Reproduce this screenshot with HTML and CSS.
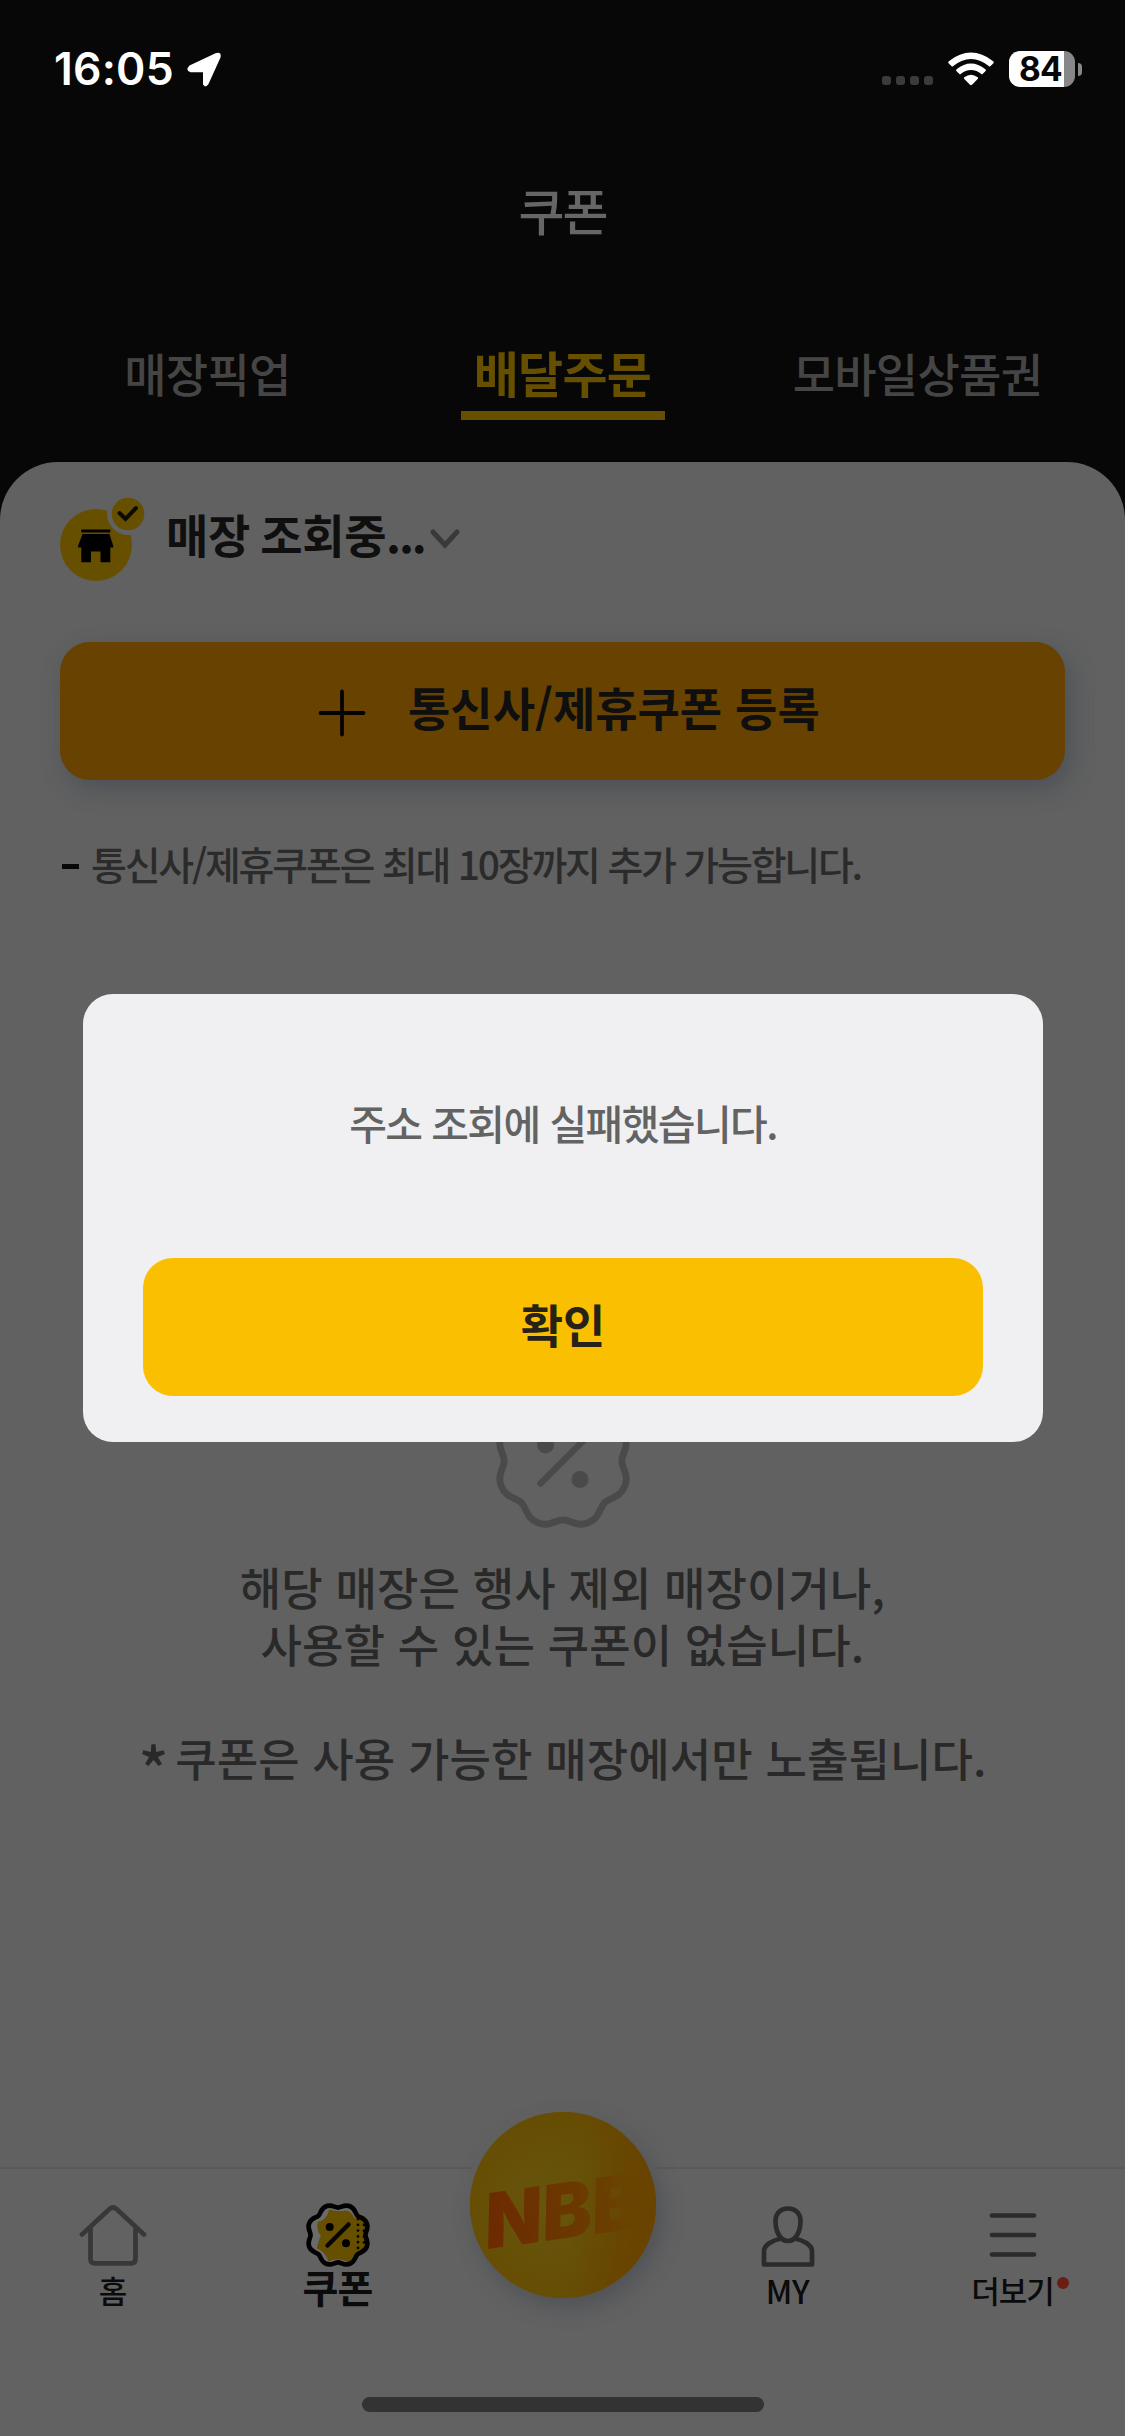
FILE: index.html
```html
<!DOCTYPE html>
<html lang="ko">
<head>
<meta charset="utf-8">
<title>쿠폰</title>
<link rel="stylesheet" href="styles.css">
</head>
<body>
<svg class="defs" width="0" height="0" aria-hidden="true">
  <defs>
    <path id="badge" d="M56 0C56 7 63.3 13.2 58.7 24.3C54.1 35.4 44.5 34.7 39.6 39.6C34.7 44.5 35.4 54.1 24.3 58.7C13.2 63.3 7 56 0 56C-7 56 -13.2 63.3 -24.3 58.7C-35.4 54.1 -34.7 44.5 -39.6 39.6C-44.5 34.7 -54.1 35.4 -58.7 24.3C-63.3 13.2 -56 7 -56 0C-56 -7 -63.3 -13.2 -58.7 -24.3C-54.1 -35.4 -44.5 -34.7 -39.6 -39.6C-34.7 -44.5 -35.4 -54.1 -24.3 -58.7C-13.2 -63.3 -7 -56 0 -56C7 -56 13.2 -63.3 24.3 -58.7C35.4 -54.1 34.7 -44.5 39.6 -39.6C44.5 -34.7 54.1 -35.4 58.7 -24.3C63.3 -13.2 56 -7 56 0Z"/>
  </defs>
</svg>
<div class="screen">
  <header class="header">
    <div class="status">
      <div class="status-left">
        <span class="time">16:05</span>
        <svg class="location" width="36" height="36" viewBox="0 0 36 36"><path d="M3.500 13.500L29.500 1.200Q35.800-.6 34.500 5.500L22.500 32Q19.500 36.500 17 32.600V20.300H4.500Q-1.200 18.500 3.500 13.500Z"/></svg>
      </div>
      <div class="status-right">
        <div class="signal"><i></i><i></i><i></i><i></i></div>
        <svg class="wifi" width="46" height="34" viewBox="0 0 46 34"><path d="M.8 9.200Q23-8 45.200 9.200Q46.300 10.200 45.200 11.400L41.800 14.800Q23-.6 4.200 14.800L.8 11.400Q-.3 10.200.8 9.200ZM8.600 17.300Q23 5.800 37.400 17.300Q38.400 18.200 37.400 19.200L34 22.500Q23 13.600 12 22.500L8.600 19.200Q7.600 18.200 8.600 17.300ZM16.300 25.300Q23 20.200 29.700 25.300Q30.500 26 29.700 27L24 32.700Q23 33.600 22 32.700L16.300 27Q15.500 26 16.300 25.300Z"/></svg>
        <div class="battery"><span>84</span></div>
        <i class="battery-tip"></i>
      </div>
    </div>
    <h1 class="title">쿠폰</h1>
    <nav class="tabs">
      <a class="tab">매장픽업</a>
      <a class="tab tab-active">배달주문</a>
      <a class="tab">모바일상품권</a>
    </nav>
  </header>

  <main class="sheet">
    <div class="store">
      <svg class="store-icon" width="86" height="86" viewBox="0 0 86 86">
        <circle cx="36" cy="49" r="36" fill="#665000"/>
        <circle cx="68" cy="18" r="21" fill="#616161"/>
        <circle cx="68" cy="18" r="16.300" fill="#665000"/>
        <path d="M59.500 17L65.500 23L76 12" fill="none" stroke="#0b0b00" stroke-width="4" stroke-linecap="round"/>
        <path d="M21.300 33.600H50.300V36.600H21.300ZM22.500 38H49.500L53.300 50V51.500H50.300V66.300H40.500V55.500H31V66.300H21.300V51.500H18V50Z"/>
      </svg>
      <span class="store-name">매장 조회중<span class="ellipsis">...</span></span>
      <svg class="chevron" width="30" height="22" viewBox="0 0 30 22"><path d="M3 3L15 16L27 3"/></svg>
    </div>

    <button class="register">
      <svg width="48" height="48" viewBox="0 0 48 48"><path d="M24 2.500V45.500M2.500 24H45.500"/></svg>
      <span>통신사/제휴쿠폰 등록</span>
    </button>

    <div class="note"><i></i><span>통신사/제휴쿠폰은 최대 10장까지 추가 가능합니다.</span></div>

    <section class="empty">
      <svg class="empty-icon" width="140" height="140" viewBox="-70 -70 140 140">
        <use href="#badge" class="empty-line" transform="scale(1.05)"/>
        <path class="empty-line" d="M-22.500 22.500L22.500 -22.500"/>
        <circle cx="-17.500" cy="-16" r="8.500"/><circle cx="17" cy="18.500" r="8.500"/>
      </svg>
      <p class="lines">해당 매장은 행사 제외 매장이거나,<br>사용할 수 있는 쿠폰이 없습니다.<br><br><span class="star">*</span> 쿠폰은 사용 가능한 매장에서만 노출됩니다.</p>
    </section>
  </main>

  <footer class="bottom">
    <a class="item">
      <svg class="home-icon" width="70" height="64" viewBox="0 0 70 64"><path class="stroke home" d="M4 30.500L31.500 5Q35 2 38.500 5L66 30.500M12.500 23V55Q12.500 59.300 16.800 59.300H53.200Q57.500 59.300 57.500 55V23"/></svg>
      <span>홈</span>
    </a>
    <a class="item item-active">
      <svg width="70" height="66" viewBox="-35 -33 70 66">
        <g transform="scale(.49)">
          <use href="#badge" fill="#6b6b6b"/>
          <path d="M-18 -52Q0 -46 17 -50Q27 -48 34 -34Q59 -33 57 -12Q50 0 57 16Q57 32 38 37Q32 57 17 54Q0 45 -19 54Q-26 34 -43 27Q-40 11 -35 2Q-45 -11 -41 -27Q-24 -28 -18 -52Z" fill="#665000"/>
          <use href="#badge" fill="none" stroke="#020202" stroke-width="9.500"/>
        </g>
        <path d="M-10.500 10.500L10.500 -10.500" stroke="#080602" stroke-width="4.500" stroke-linecap="round"/>
        <circle cx="-8.300" cy="-8" r="4"/><circle cx="8" cy="8.300" r="4"/>
        <path d="M20 -16V14M26 -10V12" stroke="#080602" stroke-width="2.800" stroke-linecap="round" stroke-dasharray="0 5.800"/>
      </svg>
      <span>쿠폰</span>
    </a>
    <div class="fab">
      <svg width="186" height="186" viewBox="0 0 186 186">
        <defs>
          <radialGradient id="coin" cx=".42" cy=".52" r=".62">
            <stop offset="0" stop-color="#66550d"/><stop offset=".55" stop-color="#665006"/><stop offset="1" stop-color="#664a02"/>
          </radialGradient>
          <linearGradient id="edge" x1="0" y1="0" x2="1" y2=".12">
            <stop offset=".62" stop-color="#694300" stop-opacity="0"/><stop offset=".98" stop-color="#694300"/>
          </linearGradient>
          <linearGradient id="letters" x1="0" x2="1">
            <stop offset="0" stop-color="#6d2a00"/><stop offset=".6" stop-color="#6b3900"/><stop offset=".82" stop-color="#6a4000"/><stop offset="1" stop-color="#694500" stop-opacity=".2"/>
          </linearGradient>
        </defs>
        <circle cx="93" cy="93" r="93" fill="url(#coin)"/>
        <circle cx="93" cy="93" r="93" fill="url(#edge)"/>
        <text class="fab-text" transform="translate(18 137) rotate(-8)" textLength="158" lengthAdjust="spacingAndGlyphs" fill="url(#letters)">NBB</text>
      </svg>
    </div>
    <a class="item">
      <svg width="70" height="64" viewBox="0 0 70 64"><path class="stroke" d="M35 3.500C42.500 3.500 47.500 8.500 47.500 16C47.500 26 43 36 35 36C27 36 22.500 26 22.500 16C22.500 8.500 27.500 3.500 35 3.500ZM28.500 33.500C20 35 11 40 11 46V59.500H59V46C59 40 50 35 41.500 33.500"/></svg>
      <span class="latin">MY</span>
    </a>
    <a class="item more">
      <svg width="70" height="64" viewBox="0 0 70 64"><path class="stroke" d="M14 10.500H56M14 30H56M14 49.500H56"/></svg>
      <span>더보기</span>
      <i class="dot"></i>
    </a>
    <i class="home-bar"></i>
  </footer>

  <div class="dialog" role="dialog">
    <p class="message">주소 조회에 실패했습니다.</p>
    <button class="confirm">확인</button>
  </div>
</div>
</body>
</html>
```
FILE: styles.css
```css
* { box-sizing: border-box; margin: 0; padding: 0; }
body { background: #616161; }
.defs { position: absolute; }
svg { display: block; flex: none; }
button { border: 0; font: inherit; }
.screen {
  position: relative;
  display: flex;
  flex-direction: column;
  width: 1125px;
  height: 2436px;
  overflow: hidden;
  background: #070707;
  font-family: "Noto Sans CJK KR", sans-serif;
  white-space: nowrap;
}

/* header */
.header { height: 462px; }
.status {
  display: flex;
  justify-content: space-between;
  height: 138px;
  padding: 51px 43px 0 54px;
  font-family: Inter, sans-serif;
  color: #fff;
}
.status-left, .status-right { display: flex; height: 36px; align-items: center; }
.time { font-size: 44.500px; font-weight: 600; letter-spacing: .2px; line-height: 36px; }
.location { margin: 2px 0 0 12px; fill: #fff; }
.signal { display: flex; gap: 5px; margin: 23px 15px 0 0; }
.signal i { width: 9px; height: 9px; border-radius: 3px; background: #3b3b3b; }
.wifi { margin-right: 15px; fill: #fff; }
.battery {
  display: flex;
  align-items: center;
  width: 66px;
  height: 36px;
  padding-left: 10px;
  border-radius: 11px;
  background: linear-gradient(90deg, #fff 55px, #878787 55px);
  color: #070707;
  font-size: 33.500px;
  font-weight: 700;
  letter-spacing: -.8px;
  line-height: 36px;
}
.battery-tip { width: 4px; height: 13px; margin-left: 3px; border-radius: 0 4px 4px 0; background: #878787; }
.title {
  height: 144px;
  color: #666;
  font-size: 50px;
  font-weight: 500;
  line-height: 143px;
  letter-spacing: -2px;
  text-align: center;
}
.tabs { display: grid; grid-template-columns: repeat(3, 1fr); height: 180px; padding: 0 30px; }
.tab {
  justify-self: center;
  height: 138px;
  color: #454545;
  font-size: 46px;
  font-weight: 500;
  line-height: 180px;
  letter-spacing: -.7px;
}
.tab-active {
  width: 204px;
  color: #665000;
  font-size: 49px;
  font-weight: 700;
  text-align: center;
  background: linear-gradient(#665000, #665000) 0 129px / 204px 9px no-repeat;
}

/* content sheet */
.sheet {
  height: 1705px;
  padding: 36px 60px 0;
  border-radius: 58px 58px 0 0;
  background: #616161;
}
.store { display: flex; align-items: flex-start; height: 144px; }
.store-icon { margin-top: -2px; }
.store-name {
  margin-left: 20px;
  color: #0f0f0f;
  font-size: 46px;
  font-weight: 700;
  line-height: 71px;
  letter-spacing: -.4px;
  word-spacing: -2px;
}
.ellipsis { letter-spacing: -2.200px; }
.chevron { margin: 31px 0 0 6px; fill: none; stroke: #393939; stroke-width: 5px; stroke-linecap: round; }
.register {
  display: flex;
  align-items: center;
  width: 1005px;
  height: 138px;
  padding-left: 258px;
  border-radius: 30px;
  background: #674200;
  box-shadow: 6px 9px 24px rgba(52, 62, 75, .45);
  color: #0f0f0f;
}
.register svg { margin-top: 4px; fill: none; stroke: #050300; stroke-width: 3.800px; stroke-linecap: round; }
.register span { height: 130px; margin-left: 42px; font-size: 46px; font-weight: 700; line-height: 121px; }
.note { display: flex; align-items: center; height: 172px; color: #2b2b2b; }
.note i { width: 17px; height: 5px; margin: 0 12px 0 2px; background: #080808; }
.note span { height: 64px; font-size: 39px; font-weight: 500; line-height: 59px; letter-spacing: -2.240px; }
.empty { display: flex; flex-direction: column; align-items: center; padding-top: 439px; color: #292929; }
.empty-icon { overflow: visible; fill: #4a4a4a; }
.empty-line { fill: none; stroke: #4a4a4a; stroke-width: 6.500px; stroke-linecap: round; }
.lines { margin-top: 27px; font-size: 45px; font-weight: 500; line-height: 57px; letter-spacing: .1px; text-align: center; }
.star { position: relative; top: 17px; font-size: 62px; line-height: 0; letter-spacing: -6px; }

/* bottom navigation */
.bottom {
  position: relative;
  display: grid;
  grid-template-columns: repeat(5, 225px);
  height: 269px;
  padding-top: 36px;
  background: #626262;
  border-top: 2px solid #5a5a5a;
  color: #0b0b0b;
}
.item { position: relative; display: flex; flex-direction: column; align-items: center; }
.item span { height: 44px; margin-top: -1px; font-size: 31px; font-weight: 500; line-height: 44px; letter-spacing: -1px; }
.item .latin { font-size: 32px; line-height: 44px; letter-spacing: -.5px; }
.home-icon { position: relative; top: -1px; }
.item-active svg { margin-top: -3px; }
.item-active span { margin-top: -4px; font-size: 39px; font-weight: 700; }
.stroke { fill: none; stroke: #2b2b2b; stroke-width: 4.700px; stroke-linecap: round; stroke-linejoin: round; }
.home { stroke: #383838; }
.fab {
  width: 186px;
  height: 186px;
  margin: -93px 0 0 20px;
  border-radius: 50%;
  background: #665000;
  box-shadow: 6px 9px 22px rgba(52, 58, 70, .4), 0 0 0 5px #626262;
}
.fab-text { font: italic 900 76px Inter, sans-serif; }
.dot { position: absolute; top: 72px; left: 157px; width: 12px; height: 12px; border-radius: 50%; background: #6b1e13; }
.home-bar { position: absolute; left: 362px; bottom: 24px; width: 402px; height: 15px; border-radius: 8px; background: #333; }

/* dialog */
.dialog {
  position: absolute;
  top: 994px;
  left: 83px;
  width: 960px;
  height: 448px;
  padding: 90px 60px 0;
  border-radius: 30px;
  background: #f0f0f2;
}
.message { height: 174px; color: #636363; font-size: 41px; font-weight: 500; line-height: 76px; letter-spacing: -1.600px; text-align: center; }
.confirm {
  display: block;
  width: 840px;
  height: 138px;
  padding-bottom: 8px;
  border-radius: 30px;
  background: #f9bf00;
  color: #272217;
  font-size: 46px;
  font-weight: 700;
  line-height: 122px;
}
```
